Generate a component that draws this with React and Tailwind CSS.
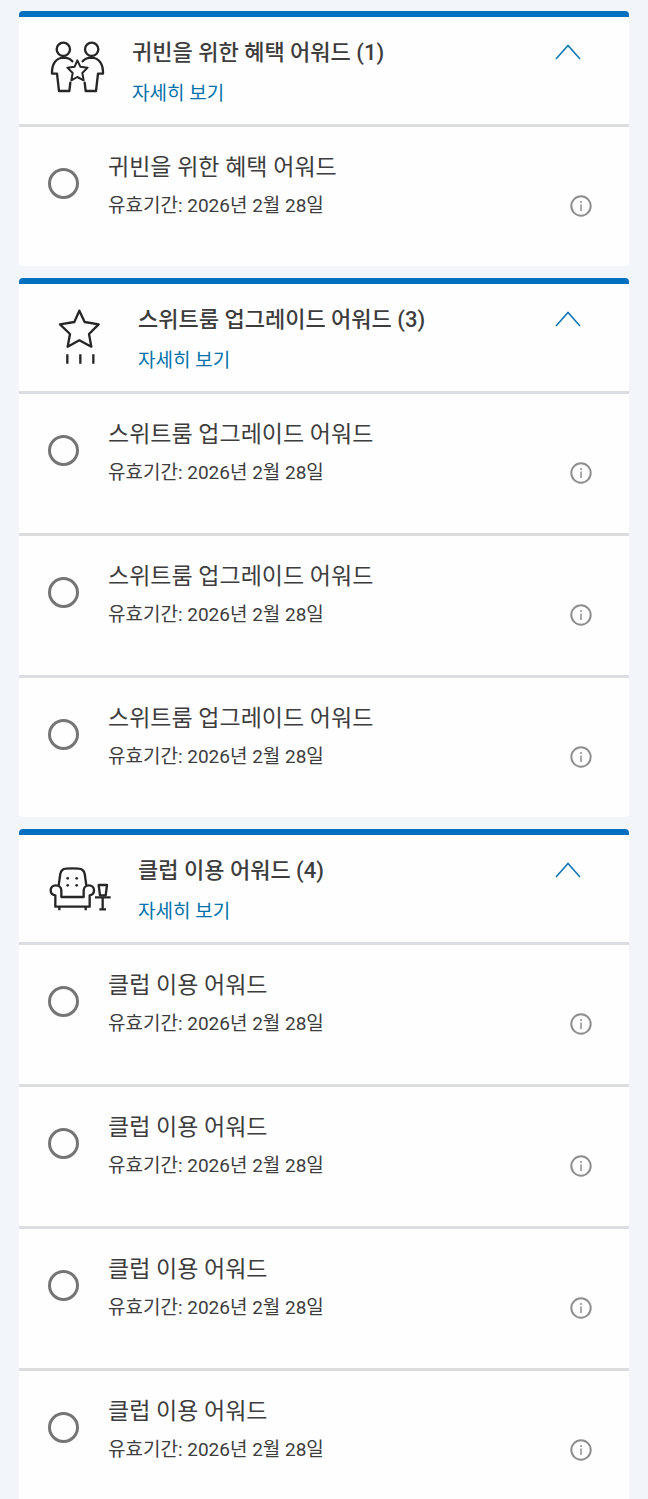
const GuestsIcon = () => (
    <svg viewBox="27 21 180 180" className="h-[60px] w-[60px]" fill="none" stroke="currentColor" strokeWidth="7" strokeLinejoin="round" strokeLinecap="round" aria-hidden="true">
        <circle cx="70" cy="58" r="20" />
        <circle cx="155" cy="58" r="20" />
        <path d="M97 94C90 86 80 83 70 83C48 84 35 102 36 131H51L57 183H88L91 158" />
        <path d="M128 94C135 86 145 83 155 83C177 84 190 102 189 131H174L168 183H137L134 158" />
        <path d="M112 91L121 110L143 113L127 129L131 151L112 141L94 151L98 129L82 113L104 110Z" strokeWidth="6" />
    </svg>
);

const SuiteIcon = () => (
    <svg viewBox="27 27 198 180" className="h-[60px] w-[66px]" fill="none" stroke="currentColor" strokeWidth="7" strokeLinejoin="round" aria-hidden="true">
        <path d="M118 47L134 81L176 88L147 117L154 155L118 136L83 155L90 117L60 88L103 81Z" />
        <path d="M82 178V206M121 178V206M160 178V206" />
    </svg>
);

const ClubIcon = () => (
    <svg viewBox="27 12 198 180" className="h-[60px] w-[66px]" fill="none" stroke="currentColor" strokeWidth="7" strokeLinejoin="round" aria-hidden="true">
        <path d="M56 103L61 68Q64 54 78 53Q97 51 116 53Q131 54 134 68L139 103" />
        <path d="M64 138V119C64 109 56 103 47 103C38 103 32 110 32 118C32 126 38 132 46 133V167H149V133C157 132 162 126 162 118C162 110 156 103 147 103C138 103 131 109 131 119V138Z" />
        <path d="M58 167V178M137 167V178" />
        <path d="M176 102H201L197 133H180Z" />
        <path d="M165 139H212M188 139V175M178 175H198" />
        <g fill="currentColor" stroke="none">
            <circle cx="83" cy="82" r="4" />
            <circle cx="110" cy="82" r="4" />
            <circle cx="83" cy="103" r="4" />
            <circle cx="110" cy="103" r="4" />
        </g>
    </svg>
);

const ChevronIcon = () => (
    <svg viewBox="0 0 26 16" className="h-4 w-[26px]" fill="none" stroke="currentColor" strokeWidth="1.5" aria-hidden="true">
        <path d="M1 15L13 1.5L25 15" />
    </svg>
);

const InfoIcon = () => (
    <svg viewBox="0 0 22 22" className="size-[22px]" fill="none" stroke="currentColor" aria-hidden="true">
        <circle cx="11" cy="11" r="9.7" strokeWidth="2" />
        <path d="M11 9.5V16M11 6V8" strokeWidth="1.5" />
    </svg>
);

const sections = [
    { id: "guest", title: "귀빈을 위한 혜택 어워드", count: 1, Icon: GuestsIcon },
    { id: "suite", title: "스위트룸 업그레이드 어워드", count: 3, Icon: SuiteIcon },
    { id: "club", title: "클럽 이용 어워드", count: 4, Icon: ClubIcon },
];

const AwardRow = ({ id, title }) => (
    <li className="flex h-[142px] border-t-3 border-[#dcdde0] pr-[37px] pl-[29px]">
        <input
            type="radio"
            name="award"
            id={id}
            className="mt-[41px] size-[31px] shrink-0 appearance-none rounded-full border-3 border-[#757575] checked:border-8 checked:border-[#0070bf]"
        />
        <div className="ml-[29px] flex-1 pt-[27px]">
            <label htmlFor={id} className="block text-[23px] leading-7">
                {title}
            </label>
            <div className="mt-3 flex items-center justify-between">
                <p className="text-[19px] leading-6">유효기간: 2026년 2월 28일</p>
                <button type="button" aria-label="어워드 정보" className="text-[#8e8e8e]">
                    <InfoIcon />
                </button>
            </div>
        </div>
    </li>
);

const AwardSection = ({ id, title, count, Icon }) => (
    <section className="overflow-hidden rounded-[4px] border-t-6 border-[#0070bf] bg-[#fefefe]">
        <div className="flex h-[107px] items-start pr-12 pl-[30px]">
            <div className="mt-5 shrink-0 text-[#262626]">
                <Icon />
            </div>
            <div className="ml-[23px] flex-1 pt-[22px]">
                <h2 className="text-[22px] leading-7 font-medium">
                    {title} ({count})
                </h2>
                <a href={`#${id}`} className="mt-[13px] block w-fit text-[19px] leading-7 text-[#0072ab]">
                    자세히 보기
                </a>
            </div>
            <button type="button" aria-expanded="true" aria-label={title} className="mt-[27px] text-[#0b74b5]">
                <ChevronIcon />
            </button>
        </div>
        <ul>
            {Array.from({ length: count }, (_, i) => (
                <AwardRow key={i} id={`${id}-${i}`} title={title} />
            ))}
        </ul>
    </section>
);

const App = () => (
    <main className="flex min-h-screen flex-col gap-3 bg-[#f2f6fa] px-[19px] pt-[11px] font-[Roboto,'Noto_Sans_CJK_KR',sans-serif] text-[#3d3d3d]">
        {sections.map((section) => (
            <AwardSection key={section.id} {...section} />
        ))}
    </main>
);

export default App;
